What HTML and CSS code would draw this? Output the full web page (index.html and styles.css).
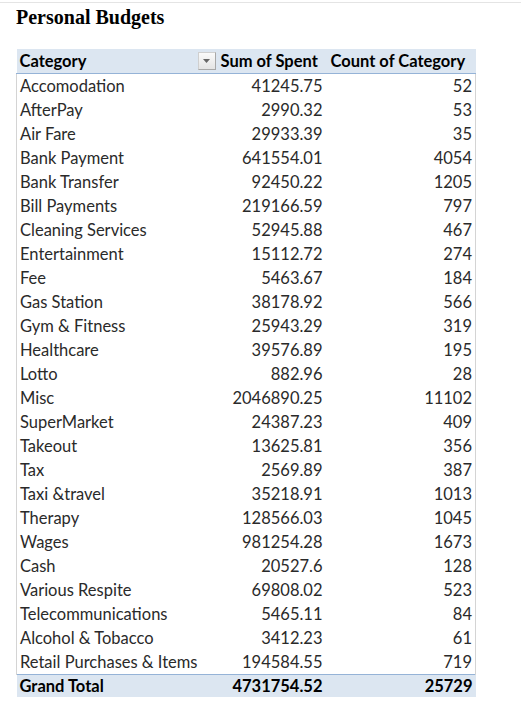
FILE: index.html
```html
<!DOCTYPE html>
<html>
<head>
<meta charset="utf-8">
<link rel="stylesheet" href="styles.css">
</head>
<body>
<div class="page">
  <h1 class="title">Personal Budgets</h1>
  <table class="pivot">
    <colgroup>
      <col class="c1">
      <col class="c2">
      <col class="c3">
    </colgroup>
    <thead>
      <tr>
        <th class="cat"><div class="cat-head"><span>Category</span><span class="dd"><svg width="7" height="4" viewBox="0 0 7 4"><path d="M0 0H7L3.5 4Z" fill="#666"/></svg></span></div></th>
        <th>Sum of Spent</th>
        <th>Count of Category</th>
      </tr>
    </thead>
    <tbody>
      <tr><td>Accomodation</td><td class="num">41245.75</td><td class="num cnt">52</td></tr>
      <tr><td>AfterPay</td><td class="num">2990.32</td><td class="num cnt">53</td></tr>
      <tr><td>Air Fare</td><td class="num">29933.39</td><td class="num cnt">35</td></tr>
      <tr><td>Bank Payment</td><td class="num">641554.01</td><td class="num cnt">4054</td></tr>
      <tr><td>Bank Transfer</td><td class="num">92450.22</td><td class="num cnt">1205</td></tr>
      <tr><td>Bill Payments</td><td class="num">219166.59</td><td class="num cnt">797</td></tr>
      <tr><td>Cleaning Services</td><td class="num">52945.88</td><td class="num cnt">467</td></tr>
      <tr><td>Entertainment</td><td class="num">15112.72</td><td class="num cnt">274</td></tr>
      <tr><td>Fee</td><td class="num">5463.67</td><td class="num cnt">184</td></tr>
      <tr><td>Gas Station</td><td class="num">38178.92</td><td class="num cnt">566</td></tr>
      <tr><td>Gym &amp; Fitness</td><td class="num">25943.29</td><td class="num cnt">319</td></tr>
      <tr><td>Healthcare</td><td class="num">39576.89</td><td class="num cnt">195</td></tr>
      <tr><td>Lotto</td><td class="num">882.96</td><td class="num cnt">28</td></tr>
      <tr><td>Misc</td><td class="num">2046890.25</td><td class="num cnt">11102</td></tr>
      <tr><td>SuperMarket</td><td class="num">24387.23</td><td class="num cnt">409</td></tr>
      <tr><td>Takeout</td><td class="num">13625.81</td><td class="num cnt">356</td></tr>
      <tr><td>Tax</td><td class="num">2569.89</td><td class="num cnt">387</td></tr>
      <tr><td>Taxi &amp;travel</td><td class="num">35218.91</td><td class="num cnt">1013</td></tr>
      <tr><td>Therapy</td><td class="num">128566.03</td><td class="num cnt">1045</td></tr>
      <tr><td>Wages</td><td class="num">981254.28</td><td class="num cnt">1673</td></tr>
      <tr><td>Cash</td><td class="num">20527.6</td><td class="num cnt">128</td></tr>
      <tr><td>Various Respite</td><td class="num">69808.02</td><td class="num cnt">523</td></tr>
      <tr><td>Telecommunications</td><td class="num">5465.11</td><td class="num cnt">84</td></tr>
      <tr><td>Alcohol &amp; Tobacco</td><td class="num">3412.23</td><td class="num cnt">61</td></tr>
      <tr><td>Retail Purchases &amp; Items</td><td class="num">194584.55</td><td class="num cnt">719</td></tr>
    </tbody>
    <tfoot>
      <tr><td>Grand Total</td><td class="num">4731754.52</td><td class="num cnt">25729</td></tr>
    </tfoot>
  </table>
</div>
</body>
</html>
```
FILE: styles.css
```css
html, body {
  margin: 0;
  padding: 0;
  background: #fff;
}
.page {
  border-top: 1px solid #e4e4e4;
  margin-top: 2px;
  padding: 4px 0 0 16px;
}
.title {
  margin: 0 0 22px 0;
  font-family: "Liberation Serif", serif;
  font-weight: bold;
  font-size: 20px;
  line-height: 20px;
  color: #000;
}
.pivot {
  border-collapse: collapse;
  font-family: Lato, "Liberation Sans", sans-serif;
  font-size: 16.5px;
  color: #2a2a2a;
  width: 459px;
  table-layout: fixed;
}
.c1 { width: 201px; }
.c2 { width: 110px; }
.c3 { width: 148px; }
.pivot th, .pivot td {
  padding: 0 3px;
  height: 24px;
  white-space: nowrap;
  line-height: 24px;
}
.pivot th {
  background: #dce6f1;
  font-weight: bold;
  color: #000;
  text-align: left;
  border-bottom: 1px solid #95b3d7;
  height: 23px;
  line-height: 24px;
}
.pivot th.cat { padding-right: 0; }
.cat-head {
  display: flex;
  justify-content: space-between;
  align-items: center;
}
.dd {
  width: 18px;
  height: 18px;
  box-sizing: border-box;
  border: 1px solid #cfcfcf;
  border-right-color: #a8a8a8;
  border-bottom-color: #a8a8a8;
  background: linear-gradient(#fafafa, #e4e4e4);
  display: flex;
  align-items: center;
  justify-content: center;
  margin-right: 2px;
}
.dd svg { display: block; }
.pivot tbody td:first-child { border-left: 1px solid #d4d4d4; }
.pivot tbody td:last-child { border-right: 1px solid #d4d4d4; }
.num { text-align: right; }
.pivot tbody td { background: #fff; }
.pivot td.num { padding-right: 5px; }
.pivot td.cnt { padding-right: 3px; }
.pivot tfoot td {
  background: #dce6f1;
  font-weight: bold;
  color: #000;
  border-top: 1px solid #95b3d7;
  height: 22px;
  line-height: 22px;
}
```
